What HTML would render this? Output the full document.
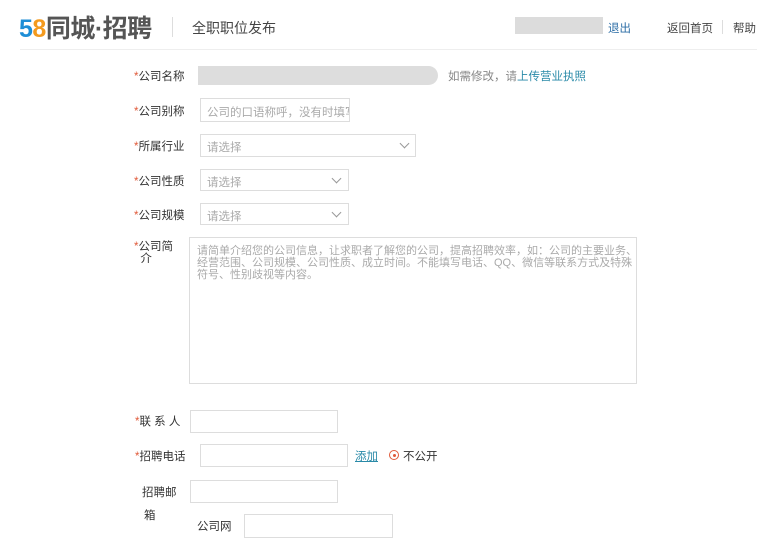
<!DOCTYPE html>
<html><head><meta charset="utf-8"><style>
body{margin:0;width:757px;height:538px;background:#fff;position:relative;overflow:hidden;font-family:"Liberation Sans","Noto Sans CJK SC",sans-serif;font-size:11.5px;color:#333}
.a{position:absolute;white-space:nowrap}
.in{position:absolute;border:1px solid #ddd;background:#fff;box-sizing:border-box}
.ph{color:#aaa;font-size:11.5px}
.st{color:#e05a3a}
.chev{position:absolute;width:6px;height:6px;border-right:1.5px solid #999;border-bottom:1.5px solid #999;transform:rotate(45deg)}
</style></head><body>
<div class="a" style="left:19px;top:9px;font-size:25px;font-weight:bold;letter-spacing:-0.5px"><span style="color:#1e8ed6">5</span><span style="color:#f39a1e">8</span><span style="color:#555">同城·招聘</span></div>
<div class="a" style="left:172px;top:17px;width:1px;height:20px;background:#ddd"></div>
<div class="a" style="left:192px;top:18px;font-size:14px;color:#444">全职职位发布</div>
<div class="a" style="left:515px;top:17px;width:88px;height:17px;background:#dcdcdc"></div>
<div class="a" style="left:608px;top:20px;color:#2d6ea6">退出</div>
<div class="a" style="left:667px;top:20px;color:#444">返回首页</div>
<div class="a" style="left:722px;top:20px;width:1px;height:14px;background:#ddd"></div>
<div class="a" style="left:733px;top:20px;color:#444">帮助</div>
<div class="a" style="left:20px;top:49px;width:737px;height:1px;background:#eee"></div>

<div class="a" style="left:134px;top:68px"><span class="st">*</span>公司名称</div>
<div class="a" style="left:198px;top:66px;width:240px;height:19px;background:#ddd;border-radius:0 10px 10px 0"></div>
<div class="a" style="left:448px;top:68px;color:#888">如需修改，请<span style="color:#2a8aa8">上传营业执照</span></div>

<div class="a" style="left:134px;top:103px"><span class="st">*</span>公司别称</div>
<div class="in" style="left:200px;top:98px;width:150px;height:24px;overflow:hidden"><span class="a ph" style="left:6px;top:5px">公司的口语称呼，没有时填写</span></div>

<div class="a" style="left:134px;top:138px"><span class="st">*</span>所属行业</div>
<div class="in" style="left:200px;top:134px;width:216px;height:23px"><span class="a ph" style="left:6px;top:4px">请选择</span><div class="chev" style="left:200px;top:5px"></div></div>

<div class="a" style="left:134px;top:173px"><span class="st">*</span>公司性质</div>
<div class="in" style="left:200px;top:169px;width:149px;height:22px"><span class="a ph" style="left:6px;top:4px">请选择</span><div class="chev" style="left:132px;top:5px"></div></div>

<div class="a" style="left:134px;top:207px"><span class="st">*</span>公司规模</div>
<div class="in" style="left:200px;top:203px;width:149px;height:22px"><span class="a ph" style="left:6px;top:4px">请选择</span><div class="chev" style="left:132px;top:5px"></div></div>

<div class="a" style="left:134px;top:241px;line-height:12px"><span class="st">*</span>公司简<br>&nbsp;&nbsp;介</div>
<div class="in" style="left:189px;top:237px;width:448px;height:147px"><div class="a ph" style="left:7px;top:7px;line-height:12px;white-space:normal;width:440px;font-size:11px">请简单介绍您的公司信息，让求职者了解您的公司，提高招聘效率，如：公司的主要业务、经营范围、公司规模、公司性质、成立时间。不能填写电话、QQ、微信等联系方式及特殊符号、性别歧视等内容。</div></div>

<div class="a" style="left:135px;top:413px"><span class="st">*</span>联 系 人</div>
<div class="in" style="left:190px;top:410px;width:148px;height:23px"></div>

<div class="a" style="left:135px;top:448px"><span class="st">*</span>招聘电话</div>
<div class="in" style="left:200px;top:444px;width:148px;height:23px"></div>
<div class="a" style="left:355px;top:448px;color:#2a8aa8;text-decoration:underline">添加</div>
<div class="a" style="left:389px;top:450px;width:8px;height:8px;border:1px solid #e05a3a;border-radius:50%"><div style="position:absolute;left:2.5px;top:2.5px;width:3px;height:3px;background:#e05a3a;border-radius:50%"></div></div>
<div class="a" style="left:403px;top:448px">不公开</div>

<div class="a" style="left:142px;top:484px">招聘邮</div>
<div class="in" style="left:190px;top:480px;width:148px;height:23px"></div>
<div class="a" style="left:144px;top:507px">箱</div>
<div class="a" style="left:197px;top:518px">公司网</div>
<div class="in" style="left:244px;top:514px;width:149px;height:24px"></div>
</body></html>
